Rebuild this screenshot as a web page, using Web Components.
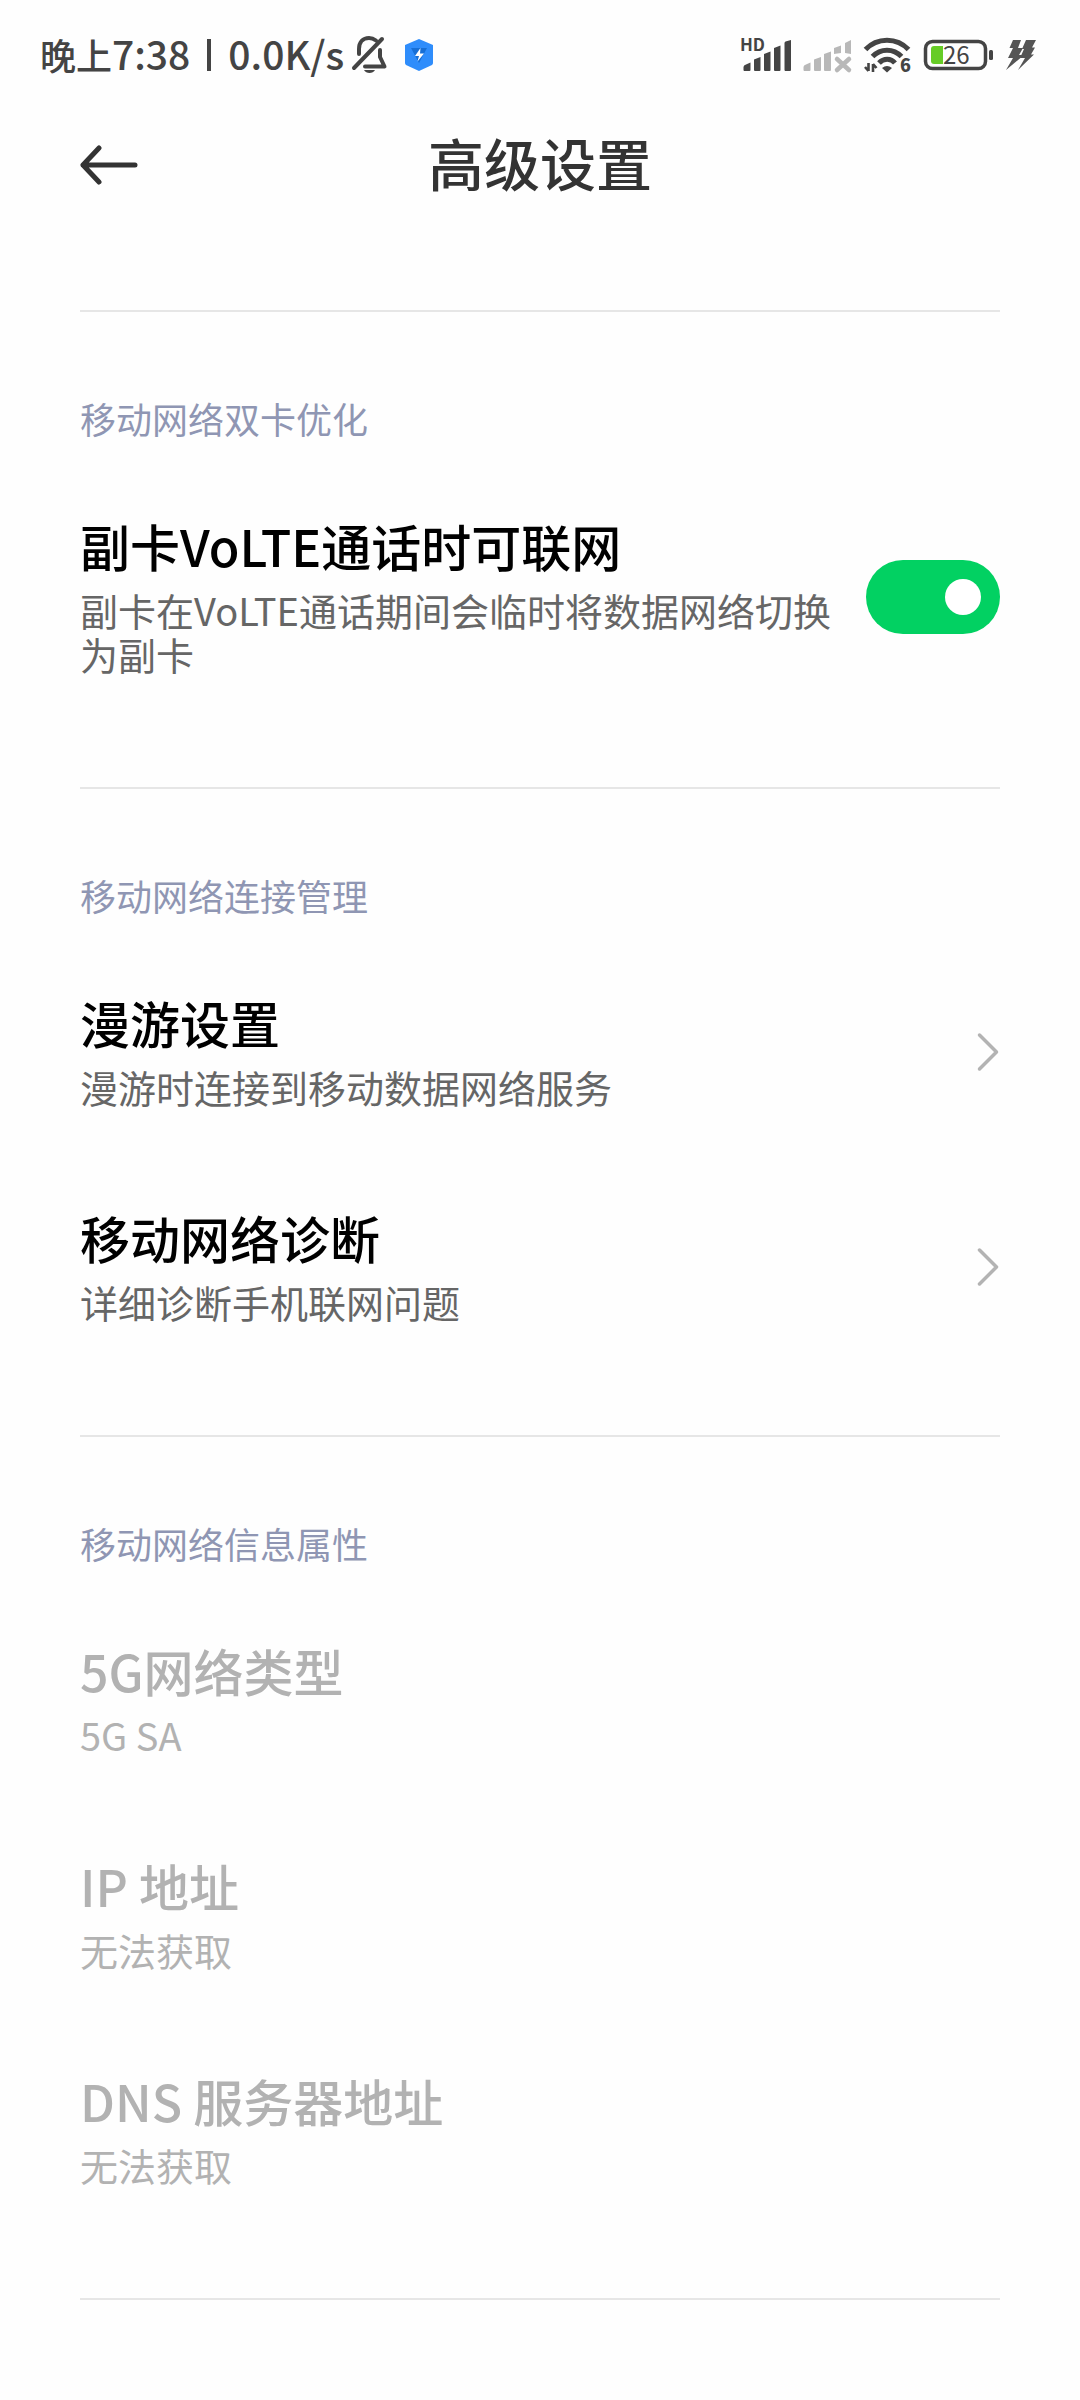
<!DOCTYPE html>
<html lang="zh-CN">
<head>
<meta charset="utf-8">
<meta name="viewport" content="width=device-width, initial-scale=1">
<title>高级设置</title>
<style>
  body { margin: 0; background: #fefefe; font-family: "Noto Sans CJK SC", sans-serif; }
</style>
</head>
<body>
<settings-page>
  <status-bar slot="status"></status-bar>
  <app-bar slot="bar">高级设置</app-bar>

  <pref-group>
    <span slot="heading">移动网络双卡优化</span>
    <pref-toggle checked>
      <span slot="title">副卡VoLTE通话时可联网</span>
      <span slot="summary">副卡在VoLTE通话期间会临时将数据网络切换为副卡</span>
    </pref-toggle>
  </pref-group>

  <pref-group>
    <span slot="heading">移动网络连接管理</span>
    <pref-link>
      <span slot="title">漫游设置</span>
      <span slot="summary">漫游时连接到移动数据网络服务</span>
    </pref-link>
    <pref-link>
      <span slot="title">移动网络诊断</span>
      <span slot="summary">详细诊断手机联网问题</span>
    </pref-link>
  </pref-group>

  <pref-group>
    <span slot="heading">移动网络信息属性</span>
    <pref-info>
      <span slot="title">5G网络类型</span>
      <span slot="summary">5G SA</span>
    </pref-info>
    <pref-info>
      <span slot="title">IP 地址</span>
      <span slot="summary">无法获取</span>
    </pref-info>
    <pref-info>
      <span slot="title">DNS 服务器地址</span>
      <span slot="summary">无法获取</span>
    </pref-info>
  </pref-group>
</settings-page>

<script>
class Base extends HTMLElement {
  constructor() {
    super();
    this.attachShadow({ mode: "open" }).innerHTML = this.constructor.markup;
  }
}

customElements.define("settings-page", class extends Base {
  static markup = `
    <style>
      :host { display: flex; flex-direction: column; min-height: 100vh; }
      main { display: flex; flex-direction: column; padding: 90px 80px 0; }
      main::after { content: ""; border-top: 2px solid #e6e6e6; }
    </style>
    <slot name="status"></slot>
    <slot name="bar"></slot>
    <main><slot></slot></main>`;
});

customElements.define("status-bar", class extends Base {
  static markup = `
    <style>
      :host { display: flex; justify-content: space-between; align-items: center; height: 110px;
              padding: 0 44px 0 40px; color: #444; font-weight: 500; }
      div { display: flex; align-items: center; }
      .text { display: flex; align-items: baseline; font-size: 39px; line-height: 60px; padding-bottom: 4px; white-space: pre; }
      .text small { font-size: 36px; }
      .bar { width: 4px; height: 32px; margin: 0 17px; background: #444; }
      .left svg { margin-left: 8px; }
      .left svg + svg { margin-left: 18px; }
      .right { gap: 12px; }
      svg { display: block; flex: none; overflow: visible; }
      text { font-family: "Noto Sans CJK SC", sans-serif; fill: #444; }
    </style>
    <div class="left">
      <span class="text"><small>晚上</small>7:38</span>
      <span class="bar"></span>
      <span class="text">0.0K/s</span>
      <svg width="35" height="38" viewBox="0 0 35 38" fill="none" stroke="#444" stroke-width="4" stroke-linecap="round" stroke-linejoin="round" aria-label="静音">
        <path d="M7 18V13C7 6 11 2 17 2c3 0 5 1 7 2.500"/>
        <path d="M28 14v7l4.500 9.500H13"/>
        <path d="M2 32 30 3"/>
        <path d="M12 34h11c-2 4-9 4-11 0z" fill="#444" stroke="none"/>
      </svg>
      <svg width="28" height="32" viewBox="0 0 28 32" aria-label="安全">
        <path d="M14 0 28 6v18q0 1-1 2L14 32 1 26q-1-1-1-2V6z" fill="#2f8dfb"/>
        <path d="M6 9h16l-8 15z" fill="#176fd6"/>
        <path d="M15.500 9 10 17h4l-1.500 5.500L19 14.500h-4z" fill="#fff"/>
      </svg>
    </div>
    <div class="right">
      <svg width="50" height="33" viewBox="0 0 50 33" fill="#444" aria-label="信号">
        <text x="-1" y="12" font-size="17" font-weight="700">HD</text>
        <path d="M2.500 28Q2.500 26 5 25.500L9.500 23.500V31q0 1-1 1h-5q-1 0-1-1zM13 20.500 19.500 18v13q0 1-1 1H14q-1 0-1-1zM23 15l6.500-2.500V31q0 1-1 1H24q-1 0-1-1zM33 9l6.500-2.500V31q0 1-1 1H34q-1 0-1-1zM43.500 4q0-1 1-1.500L50 1v30q0 1-1 1h-4.500q-1 0-1-1z"/>
      </svg>
      <svg width="49" height="33" viewBox="0 0 49 33" fill="#b8b8b8" aria-label="无信号">
        <path d="M.5 28Q.5 26 3 25.500L7.500 23.500V31q0 1-1 1h-5q-1 0-1-1zM11 20.500 18 18v13q0 1-1 1h-5q-1 0-1-1zM21 15l7-2.500V31q0 1-1 1h-5q-1 0-1-1zM31 9l7-2.500V14l-7 1zM42 4l6-3v14l-6-1z"/>
        <path d="M34 20l12 11M46 20 34 31" stroke="#b8b8b8" stroke-width="4.500" stroke-linecap="round"/>
      </svg>
      <svg width="48" height="34" viewBox="0 0 48 34" fill="none" stroke="#444" stroke-width="5" aria-label="无线网络">
        <path d="M1.500 11.500C13-1 33-1 44.500 11.500M8.500 18.500c8-8.500 21-8.500 29 0M15 25c4.500-5 12-5 16 0"/>
        <path d="M18 30q5-4 10 0l-5 4.500z" fill="#444" stroke="none"/>
        <path d="M4.500 25v8M1 29l3.500 4M9 34v-8M9 26l3.500 4" stroke-width="2.600"/>
        <text x="36" y="34" font-size="18" font-weight="900" stroke="none">6</text>
      </svg>
      <svg width="70" height="30" viewBox="0 0 70 30" aria-label="电量">
        <rect x="1.500" y="1.500" width="60" height="27" rx="7" fill="none" stroke="#444" stroke-width="3.500"/>
        <path d="M10 6h9v18h-9q-3 0-3-3V9q0-3 3-3z" fill="#66cc26"/>
        <rect x="65" y="10" width="4" height="10" rx="1.500" fill="#444"/>
        <text x="19" y="24" font-size="24" font-weight="400">26</text>
      </svg>
      <svg width="30" height="32" viewBox="0 0 30 32" fill="#555" aria-label="充电">
        <path d="M7 1h8l-3 8h5l-4 7h5L0 31l7-12H2l5-10H3.500z"/>
        <path d="M20 1h10l-4 7.500h3l-4 7h3L12 31l7-12h-5l4-9h-2z"/>
      </svg>
    </div>`;
});

customElements.define("app-bar", class extends Base {
  static markup = `
    <style>
      :host { display: grid; grid-template-columns: 58px 1fr 58px; align-items: center; height: 110px; padding: 0 80px; color: #333; }
      button { display: flex; padding: 0; border: 0; background: none; color: inherit; }
      h1 { margin: 0; padding-bottom: 6px; font-size: 56px; line-height: 80px; font-weight: 500; text-align: center; }
    </style>
    <button type="button" aria-label="返回">
      <svg width="58" height="40" viewBox="0 0 58 40" fill="none" stroke="currentColor" stroke-width="5" stroke-linecap="round" stroke-linejoin="round">
        <path d="M19 3 3 20l16 17M3 20h52"/>
      </svg>
    </button>
    <h1><slot></slot></h1>`;
});

customElements.define("pref-group", class extends Base {
  static markup = `
    <style>
      :host { display: block; border-top: 2px solid #e6e6e6; padding-bottom: 61px; }
      h2 { margin: 0; padding: 76px 0 19px; font-size: 36px; line-height: 60px; font-weight: 400; color: #8f96b3; }
    </style>
    <section>
      <h2><slot name="heading"></slot></h2>
      <slot></slot>
    </section>`;
});

const rowStyle = `
  :host { display: block; --title: #000; --summary: #666; }
  .row { display: flex; align-items: center; gap: 24px; color: inherit; text-decoration: none; }
  .text { flex: 1; display: flex; flex-direction: column; gap: 9px; padding: 45px 0 50px; }
  .title { font-size: 50px; line-height: 67px; font-weight: 500; color: var(--title); }
  .summary { font-size: 38px; line-height: 44px; color: var(--summary); }`;
const rowText = `
  <span class="text">
    <span class="title"><slot name="title"></slot></span>
    <span class="summary"><slot name="summary"></slot></span>
  </span>`;

customElements.define("pref-toggle", class extends Base {
  static markup = `
    <style>${rowStyle}
      input { appearance: none; flex: none; display: flex; align-items: center; box-sizing: border-box;
              width: 134px; height: 74px; margin: 0; padding: 0 19px; border-radius: 37px; background: #ddd; }
      input::before { content: ""; width: 36px; height: 36px; border-radius: 50%; background: #fff; }
      input:checked { background: #02d162; justify-content: flex-end; }
    </style>
    <label class="row">${rowText}<input type="checkbox" role="switch"></label>`;
  connectedCallback() {
    this.shadowRoot.querySelector("input").checked = this.hasAttribute("checked");
  }
});

customElements.define("pref-link", class extends Base {
  static markup = `
    <style>${rowStyle}</style>
    <a class="row" href="#">${rowText}
      <svg width="24" height="40" viewBox="0 0 24 40" fill="none" stroke="#b3b3b3" stroke-width="3.500" stroke-linecap="round" stroke-linejoin="round">
        <path d="M3.500 3 20.500 20l-17 17"/>
      </svg>
    </a>`;
});

customElements.define("pref-info", class extends Base {
  static markup = `
    <style>${rowStyle}
      :host { --title: #b2b2b2; --summary: #b2b2b2; }
    </style>
    <div class="row">${rowText}</div>`;
});
</script>
</body>
</html>
